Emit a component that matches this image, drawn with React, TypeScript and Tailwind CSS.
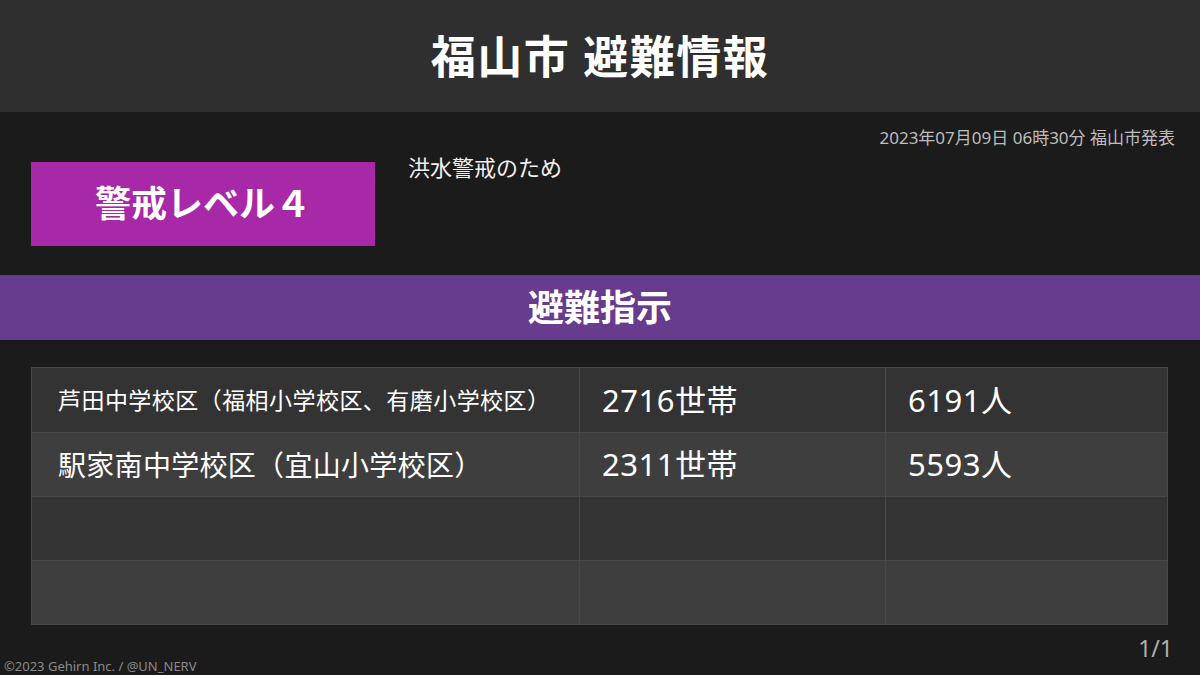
import React from 'react';

const rows = [
  { area: '芦田中学校区（福相小学校区、有磨小学校区）', small: true, households: '2716世帯', people: '6191人' },
  { area: '駅家南中学校区（宜山小学校区）', small: false, households: '2311世帯', people: '5593人' },
  { area: '', small: false, households: '', people: '' },
  { area: '', small: false, households: '', people: '' },
];

export default function App() {
  return (
    <div
      className="w-[1200px] h-[675px] bg-[#1b1b1b] text-white flex flex-col overflow-hidden"
      style={{ fontFamily: '"Noto Sans", "Noto Sans CJK JP", sans-serif' }}
    >
      <header className="h-[112px] shrink-0 bg-[#2f2f2f] flex items-center justify-center">
        <h1 className="text-[45px] font-bold leading-none tracking-[1.5px]">福山市 避難情報</h1>
      </header>

      <div className="h-[163px] shrink-0 flex flex-col">
        <div className="pt-[14px] pr-[25px] text-right text-[17px] leading-[24px] text-[#bdbdbd]">
          2023年07月09日 06時30分 福山市発表
        </div>
        <div className="flex mt-[12px] pl-[31px]">
          <div className="w-[344px] h-[84px] bg-[#a829a8] flex items-center justify-center">
            <span className="text-[36px] font-bold leading-none">警戒レベル４</span>
          </div>
          <div className="ml-[33px] -mt-[11px] text-[22px] leading-[32px] text-[#f0f0f0]">洪水警戒のため</div>
        </div>
      </div>

      <div className="h-[65px] shrink-0 bg-[#673b8d] flex items-center justify-center">
        <span className="text-[36px] font-bold leading-none">避難指示</span>
      </div>

      <div className="mt-[27px] ml-[31px] w-[1137px] border border-[#484848]">
        {rows.map((r, i) => (
          <div
            key={i}
            className={`grid grid-cols-[548px_306px_1fr] h-[64px] ${i > 0 ? 'border-t border-[#484848]' : ''} ${i % 2 === 0 ? 'bg-[#333333]' : 'bg-[#3e3e3e]'}`}
          >
            <div className="flex items-center pl-[26px] border-r border-[#484848]">
              <span className={r.small ? 'text-[23px] tracking-[0.45px]' : 'text-[28px] tracking-[0.3px]'}>{r.area}</span>
            </div>
            <div className="flex items-center pl-[22px] border-r border-[#484848]">
              <span className="text-[31px] tracking-[0.5px]">{r.households}</span>
            </div>
            <div className="flex items-center pl-[22px]">
              <span className="text-[31px] tracking-[0.5px]">{r.people}</span>
            </div>
          </div>
        ))}
      </div>

      <div className="flex-1 relative">
        <div className="absolute right-[27px] top-[12px] text-[23px] leading-none text-[#b0b0b0]">1/1</div>
        <div className="absolute left-[4px] bottom-[2px] text-[13px] leading-none text-[#8a8a8a]">©2023 Gehirn Inc. / @UN_NERV</div>
      </div>
    </div>
  );
}
